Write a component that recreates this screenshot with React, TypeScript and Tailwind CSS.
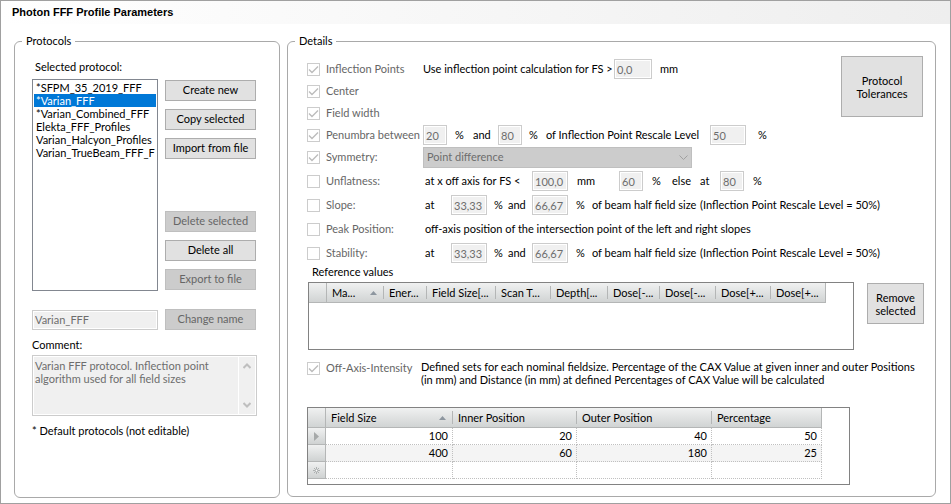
import { useState, type ReactNode } from 'react';
import clsx from 'clsx';

const protocols = [
  '*SFPM_35_2019_FFF',
  '*Varian_FFF',
  '*Varian_Combined_FFF',
  'Elekta_FFF_Profiles',
  'Varian_Halcyon_Profiles',
  'Varian_TrueBeam_FFF_F',
];

const referenceColumns = [
  { label: 'Ma...', width: 'w-[57px]', sorted: true },
  { label: 'Ener...', width: 'w-[43px]' },
  { label: 'Field Size[...', width: 'w-[69px]' },
  { label: 'Scan T...', width: 'w-[55px]' },
  { label: 'Depth[...', width: 'w-[57px]' },
  { label: 'Dose[-...', width: 'w-[52px]' },
  { label: 'Dose[-...', width: 'w-[56px]' },
  { label: 'Dose[+...', width: 'w-[55px]' },
  { label: 'Dose[+...', width: 'w-[55px]' },
];

const intensityColumns = [
  { label: 'Field Size', width: 'w-[127px]', sorted: true },
  { label: 'Inner Position', width: 'w-[124px]' },
  { label: 'Outer Position', width: 'w-[135px]' },
  { label: 'Percentage', width: 'w-[110px]' },
];

const intensityRows = [
  ['100', '20', '40', '50'],
  ['400', '60', '180', '25'],
  ['', '', '', ''],
];

const headerFill = 'bg-linear-to-b from-[#f0f1f1] to-[#cfd2d2]';

interface ButtonProps {
  children: ReactNode;
  className?: string;
  disabled?: boolean;
}

function Button({ children, className, disabled }: ButtonProps) {
  return (
    <button
      type="button"
      disabled={disabled}
      className={clsx(
        'shrink-0 whitespace-nowrap border text-center',
        disabled
          ? 'border-[#bfbfbf] bg-[#cccccc] text-[#666666]'
          : 'border-[#adadad] bg-[#e1e1e1] text-black',
        className,
      )}
    >
      {children}
    </button>
  );
}

function Group({ title, className, children }: { title: string; className?: string; children: ReactNode }) {
  return (
    <fieldset className={clsx('min-w-0 rounded-md border border-[#a9a9a9]', className)}>
      <legend className="ml-[7px] h-4 px-1 leading-4">{title}</legend>
      {children}
    </fieldset>
  );
}

function ValueBox({ label, value, className }: { label: string; value: string; className: string }) {
  return (
    <input
      type="text"
      aria-label={label}
      defaultValue={value}
      disabled
      className={clsx(
        'h-5 shrink-0 border border-[#cccccc] bg-[#f0f0f0] px-[2px] text-[#6d6d6d] shadow-[inset_0_0_0_1px_#ffffff]',
        className,
      )}
    />
  );
}

function Check({ label, checked }: { label: string; checked?: boolean }) {
  return (
    <label className="flex w-[116px] items-center gap-[6px] whitespace-nowrap text-[#666666]">
      <span className="relative block size-[13px] shrink-0">
        <input
          type="checkbox"
          defaultChecked={checked}
          disabled
          className="block size-[13px] appearance-none border border-[#cccccc] bg-white"
        />
        {checked && (
          <svg viewBox="0 0 13 13" className="absolute inset-0 size-[13px]" fill="none" stroke="#bcbcbc">
            <path d="M2 6.5 5 9.5 11 3.5" strokeWidth="1.4" />
          </svg>
        )}
      </span>
      {label}
    </label>
  );
}

function Row({ label, checked, tall, children }: { label: string; checked?: boolean; tall?: boolean; children?: ReactNode }) {
  return (
    <div className={clsx('flex items-center whitespace-nowrap *:shrink-0', tall ? 'h-6' : 'h-[22px]')}>
      <Check label={label} checked={checked} />
      {children}
    </div>
  );
}

function RangeRow({ label }: { label: string }) {
  return (
    <Row label={label} tall>
      <span className="ml-[2px] w-[26px]">at</span>
      <ValueBox label={`${label} from`} value="33,33" className="w-9" />
      <span className="ml-[7px] w-[14px]">%</span>
      <span className="w-6">and</span>
      <ValueBox label={`${label} to`} value="66,67" className="w-9" />
      <span className="ml-2 w-4">%</span>
      <span className="w-[108px]">of beam half field size</span>
      <span>(Inflection Point Rescale Level = 50%)</span>
    </Row>
  );
}

function HeaderCell({ label, width, sorted, last }: { label: string; width: string; sorted?: boolean; last: boolean }) {
  return (
    <th scope="col" className={clsx('border-b border-[#b4b6b6] p-0 text-left font-normal', width, last && 'border-r')}>
      <div
        className={clsx(
          'flex h-[13px] items-center justify-between whitespace-nowrap pl-[5px] leading-[13px]',
          !last && 'border-r border-[#b4b6b6]',
        )}
      >
        {label}
        {sorted && (
          <svg viewBox="0 0 7 4" className="mr-[6px] h-1 w-[7px]" fill="#8d969f">
            <path d="M3.5 0 7 4H0z" />
          </svg>
        )}
      </div>
    </th>
  );
}

function RowMarker({ index }: { index: number }) {
  if (index === 0) {
    return (
      <svg viewBox="0 0 6 9" className="mx-auto h-[9px] w-[6px]" fill="#a6a9a9">
        <path d="M0 0 5 4.5 0 9z" />
      </svg>
    );
  }
  if (index === 2) {
    return (
      <svg viewBox="0 0 7 7" className="mx-auto size-[7px]" fill="none" stroke="#a0a3a3">
        <path d="M3.5 0v7M0 3.5h7M1 1l5 5M6 1 1 6" strokeWidth="0.8" />
        <circle cx="3.5" cy="3.5" r="0.9" fill="#ffffff" stroke="none" />
      </svg>
    );
  }
  return null;
}

function ProtocolsPanel() {
  const [selected, setSelected] = useState('*Varian_FFF');

  return (
    <Group title="Protocols" className="w-[266px] shrink-0">
      <div className="px-[17px] pb-[58px] pt-[10px]">
        <p id="protocol-label" className="h-5 pl-[3px] leading-4">Selected protocol:</p>
        <div className="flex gap-[7px]">
          <ul
            role="listbox"
            aria-labelledby="protocol-label"
            className="h-[212px] w-[126px] overflow-hidden border border-[#828790] p-px"
          >
            {protocols.map((name) => (
              <li
                key={name}
                role="option"
                aria-selected={name === selected}
                onClick={() => setSelected(name)}
                className={clsx(
                  'h-[13px] whitespace-nowrap pl-[2px] leading-[13px]',
                  name === selected && 'bg-[#0078d7] text-white',
                )}
              >
                {name}
              </li>
            ))}
          </ul>
          <div className="flex w-[91px] flex-col gap-2 pt-px">
            <Button className="h-[21px]">Create new</Button>
            <Button className="h-[21px]">Copy selected</Button>
            <Button className="h-[21px]">Import from file</Button>
            <Button className="mt-11 h-[21px]" disabled>Delete selected</Button>
            <Button className="h-[21px]">Delete all</Button>
            <Button className="h-[21px]" disabled>Export to file</Button>
          </div>
        </div>
        <div className="mt-[18px] flex items-center gap-[7px]">
          <ValueBox label="Protocol name" value="Varian_FFF" className="w-[126px]" />
          <Button className="h-[21px] w-[91px]" disabled>Change name</Button>
        </div>
        <label htmlFor="comment" className="mt-[7px] block h-[18px] leading-4">Comment:</label>
        <div className="flex h-[61px] w-[225px] border border-[#cccccc] bg-[#f0f0f0] shadow-[inset_0_0_0_1px_#ffffff]">
          <textarea
            id="comment"
            disabled
            defaultValue="Varian FFF protocol. Inflection point algorithm used for all field sizes"
            className="block min-w-0 flex-1 resize-none overflow-hidden py-[3px] pl-[2px] leading-[13px] text-[#6d6d6d]"
          />
          <div className="my-px mr-px flex w-[17px] flex-col items-center justify-between border-l border-white py-[6px]">
            <svg viewBox="0 0 8 6" className="h-[6px] w-2" fill="none" stroke="#bfbfbf" strokeWidth="2">
              <path d="M.5 5 4 1.5 7.5 5" />
            </svg>
            <svg viewBox="0 0 8 6" className="h-[6px] w-2" fill="none" stroke="#bfbfbf" strokeWidth="2">
              <path d="M.5 1 4 4.5 7.5 1" />
            </svg>
          </div>
        </div>
        <p className="mt-[7px] leading-4">* Default protocols (not editable)</p>
      </div>
    </Group>
  );
}

function DetailsPanel() {
  return (
    <Group title="Details" className="flex-1">
      <div className="pb-[11px] pl-[19px] pr-[11px]">
        <div className="flex items-start pt-[7px]">
          <div className="min-w-0 flex-1 pt-[2px]">
            <Row label="Inflection Points" checked>
              <span className="w-[191px]">Use inflection point calculation for FS &gt;</span>
              <ValueBox label="Minimum field size" value="0,0" className="w-[38px]" />
              <span className="ml-2">mm</span>
            </Row>
            <Row label="Center" checked />
            <Row label="Field width" checked />
          </div>
          <Button className="mr-px h-[61px] w-[82px] leading-[13px]">Protocol<br />Tolerances</Button>
        </div>
        <Row label="Penumbra between" checked>
          <ValueBox label="Penumbra from" value="20" className="w-6" />
          <span className="ml-2 w-[18px]">%</span>
          <span className="w-[25px]">and</span>
          <ValueBox label="Penumbra to" value="80" className="w-6" />
          <span className="ml-[7px] w-[17px]">%</span>
          <span className="w-[164px]">of Inflection Point Rescale Level</span>
          <ValueBox label="Rescale level" value="50" className="w-9" />
          <span className="ml-3">%</span>
        </Row>
        <Row label="Symmetry:" checked>
          <div className="relative w-[269px]">
            <select
              aria-label="Symmetry"
              disabled
              className="block h-[21px] w-full appearance-none border border-[#bfbfbf] bg-[#cccccc] pl-[3px] text-[#6d6d6d] opacity-100"
            >
              <option>Point difference</option>
            </select>
            <svg viewBox="0 0 9 6" className="absolute right-1 top-2 h-[6px] w-[9px]" fill="none" stroke="#a0a0a0">
              <path d="M.5.5 4.5 4.5 8.5.5" />
            </svg>
          </div>
        </Row>
        <div className="mt-px">
          <Row label="Unflatness:" tall>
            <span className="ml-[2px] w-[107px]">at x off axis for FS &lt;</span>
            <ValueBox label="Field size limit" value="100,0" className="w-9" />
            <span className="ml-[9px] w-[42px]">mm</span>
            <ValueBox label="Off axis below limit" value="60" className="w-6" />
            <span className="ml-[9px] w-5">%</span>
            <span className="w-7">else</span>
            <span className="w-5">at</span>
            <ValueBox label="Off axis otherwise" value="80" className="w-6" />
            <span className="ml-[9px]">%</span>
          </Row>
          <RangeRow label="Slope:" />
          <Row label="Peak Position:" tall>
            <span className="ml-[2px]">off-axis position of the intersection point of the left and right slopes</span>
          </Row>
          <RangeRow label="Stability:" />
        </div>

        <p id="reference-label" className="h-[17px] pl-[5px] leading-[13px]">Reference values</p>
        <div className="ml-px flex items-start gap-[13px]">
          <div className="h-[68px] min-w-0 flex-1 overflow-hidden border border-[#828282]">
            <table aria-labelledby="reference-label" className="w-[517px] table-fixed border-separate border-spacing-0">
              <thead>
                <tr className={clsx('h-5', headerFill)}>
                  <td className="w-[18px] border-r border-b border-[#b4b6b6] p-0" />
                  {referenceColumns.map((column, index) => (
                    <HeaderCell key={index} {...column} last={index === referenceColumns.length - 1} />
                  ))}
                </tr>
              </thead>
            </table>
          </div>
          <Button className="mt-px h-[41px] w-[57px] leading-[13px]">Remove<br />selected</Button>
        </div>

        <div className="mt-[10px] flex items-start *:shrink-0">
          <Check label="Off-Axis-Intensity" checked />
          <p className="-ml-[2px] leading-[13px]">
            Defined sets for each nominal fieldsize. Percentage of the CAX Value at given inner and outer Positions
            <br />
            (in mm) and Distance (in mm) at defined Percentages of CAX Value will be calculated
          </p>
        </div>

        <div className="mr-[74px] mt-[21px] h-[78px] overflow-hidden border border-[#828282]">
          <table aria-label="Off-axis intensity" className="w-[514px] table-fixed border-separate border-spacing-0">
            <thead>
              <tr className={clsx('h-5', headerFill)}>
                <td className="w-[18px] border-r border-b border-[#b4b6b6] p-0" />
                {intensityColumns.map((column, index) => (
                  <HeaderCell key={column.label} {...column} last={index === intensityColumns.length - 1} />
                ))}
              </tr>
            </thead>
            <tbody>
              {intensityRows.map((row, index) => (
                <tr key={index} className={clsx('h-[17px]', index === 1 && 'bg-[#f4f4f4]')}>
                  <td className={clsx('border-r border-b border-[#b4b6b6] p-0', headerFill)}>
                    <RowMarker index={index} />
                  </td>
                  {row.map((value, cell) => (
                    <td
                      key={cell}
                      className="border-r border-b border-dotted border-[#c0c0c0] py-0 pl-0 pr-1 text-right leading-4"
                    >
                      {value}
                    </td>
                  ))}
                </tr>
              ))}
            </tbody>
          </table>
        </div>
      </div>
    </Group>
  );
}

export default function App() {
  return (
    <main className="min-h-screen border border-[#a0a0a0] bg-white font-[Lato,Arial,sans-serif] text-[11px] text-black">
      <header className="flex h-[23px] items-center bg-linear-to-r from-white to-[#eeeeee] pl-[11px]">
        <h1 className="font-['Liberation_Sans',Arial,sans-serif] font-bold">Photon FFF Profile Parameters</h1>
      </header>
      <div className="flex items-start gap-[7px] pb-[5px] pl-[13px] pr-[14px] pt-[9px]">
        <ProtocolsPanel />
        <DetailsPanel />
      </div>
    </main>
  );
}
